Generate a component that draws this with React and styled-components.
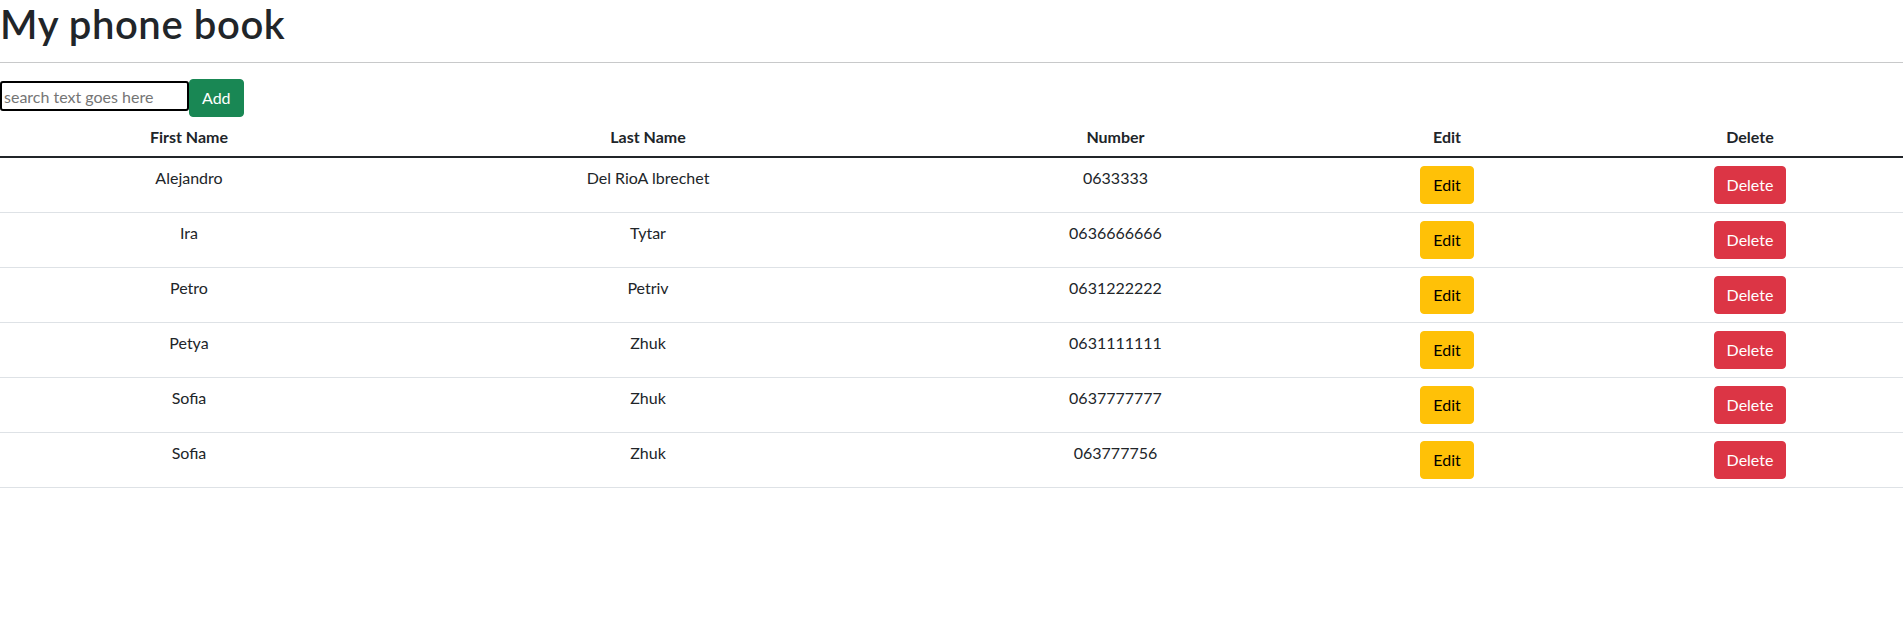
import React from 'react'
import styled, { createGlobalStyle } from 'styled-components'

const GlobalStyle = createGlobalStyle`
  html, body {
    margin: 0;
    padding: 0;
    background: #fff;
    overflow-x: hidden;
  }
  body {
    font-family: Lato, "Open Sans", sans-serif;
    font-size: 16px;
    line-height: 1.5;
    color: #212529;
  }
`

const contacts = [
  { first: 'Alejandro', last: 'Del RioA lbrechet', number: '0633333' },
  { first: 'Ira', last: 'Tytar', number: '0636666666' },
  { first: 'Petro', last: 'Petriv', number: '0631222222' },
  { first: 'Petya', last: 'Zhuk', number: '0631111111' },
  { first: 'Sofia', last: 'Zhuk', number: '0637777777' },
  { first: 'Sofia', last: 'Zhuk', number: '063777756' },
]

const columns = [
  { title: 'First Name', width: 378 },
  { title: 'Last Name', width: 540 },
  { title: 'Number', width: 395 },
  { title: 'Edit', width: 268 },
  { title: 'Delete', width: 338 },
]

const Page = styled.div`
  overflow: hidden;
`

const Title = styled.h1`
  margin: 0;
  font-size: 40px;
  font-weight: 600;
  line-height: 48px;
  letter-spacing: 0.6px;
`

const Divider = styled.hr`
  margin: 14px 0 16px;
  border: 0;
  border-top: 1px solid #c8c9ca;
`

const Toolbar = styled.div`
  display: flex;
  align-items: flex-start;
  height: 38px;
`

const SearchInput = styled.input`
  box-sizing: border-box;
  width: 189px;
  height: 30px;
  margin-top: 2px;
  padding: 0 2px;
  border: 2px solid #000;
  border-radius: 3px;
  font: inherit;
  font-size: 16px;
  color: #212529;
  outline: none;

  &::placeholder {
    color: #757575;
  }
`

const Button = styled.button`
  box-sizing: border-box;
  height: 38px;
  padding: 6px 12px;
  border: 1px solid ${p => p.$bg};
  border-radius: 4px;
  background: ${p => p.$bg};
  color: ${p => p.$fg};
  font: inherit;
  font-size: 16px;
  line-height: 24px;
  cursor: pointer;
`

const Table = styled.table`
  width: 1919px;
  table-layout: fixed;
  border-collapse: collapse;
  vertical-align: top;
`

const HeadCell = styled.th`
  padding: 8px 8px 7px;
  font-weight: 700;
  text-align: center;
  border-bottom: 2px solid #212529;
`

const Cell = styled.td`
  padding: 8px;
  text-align: center;
  vertical-align: top;
  border-bottom: 1px solid #dee2e6;
`

const ContactRow = ({ contact }) => (
  <tr>
    <Cell>{contact.first}</Cell>
    <Cell>{contact.last}</Cell>
    <Cell>{contact.number}</Cell>
    <Cell>
      <Button $bg="#ffc107" $fg="#000">Edit</Button>
    </Cell>
    <Cell>
      <Button $bg="#dc3545" $fg="#fff">Delete</Button>
    </Cell>
  </tr>
)

export default function App() {
  return (
    <Page>
      <GlobalStyle />
      <Title>My phone book</Title>
      <Divider />
      <Toolbar>
        <SearchInput placeholder="search text goes here" />
        <Button $bg="#198754" $fg="#fff">Add</Button>
      </Toolbar>
      <Table>
        <colgroup>
          {columns.map(c => <col key={c.title} style={{ width: c.width }} />)}
        </colgroup>
        <thead>
          <tr>
            {columns.map(c => <HeadCell key={c.title}>{c.title}</HeadCell>)}
          </tr>
        </thead>
        <tbody>
          {contacts.map((c, i) => <ContactRow key={i} contact={c} />)}
        </tbody>
      </Table>
    </Page>
  )
}
